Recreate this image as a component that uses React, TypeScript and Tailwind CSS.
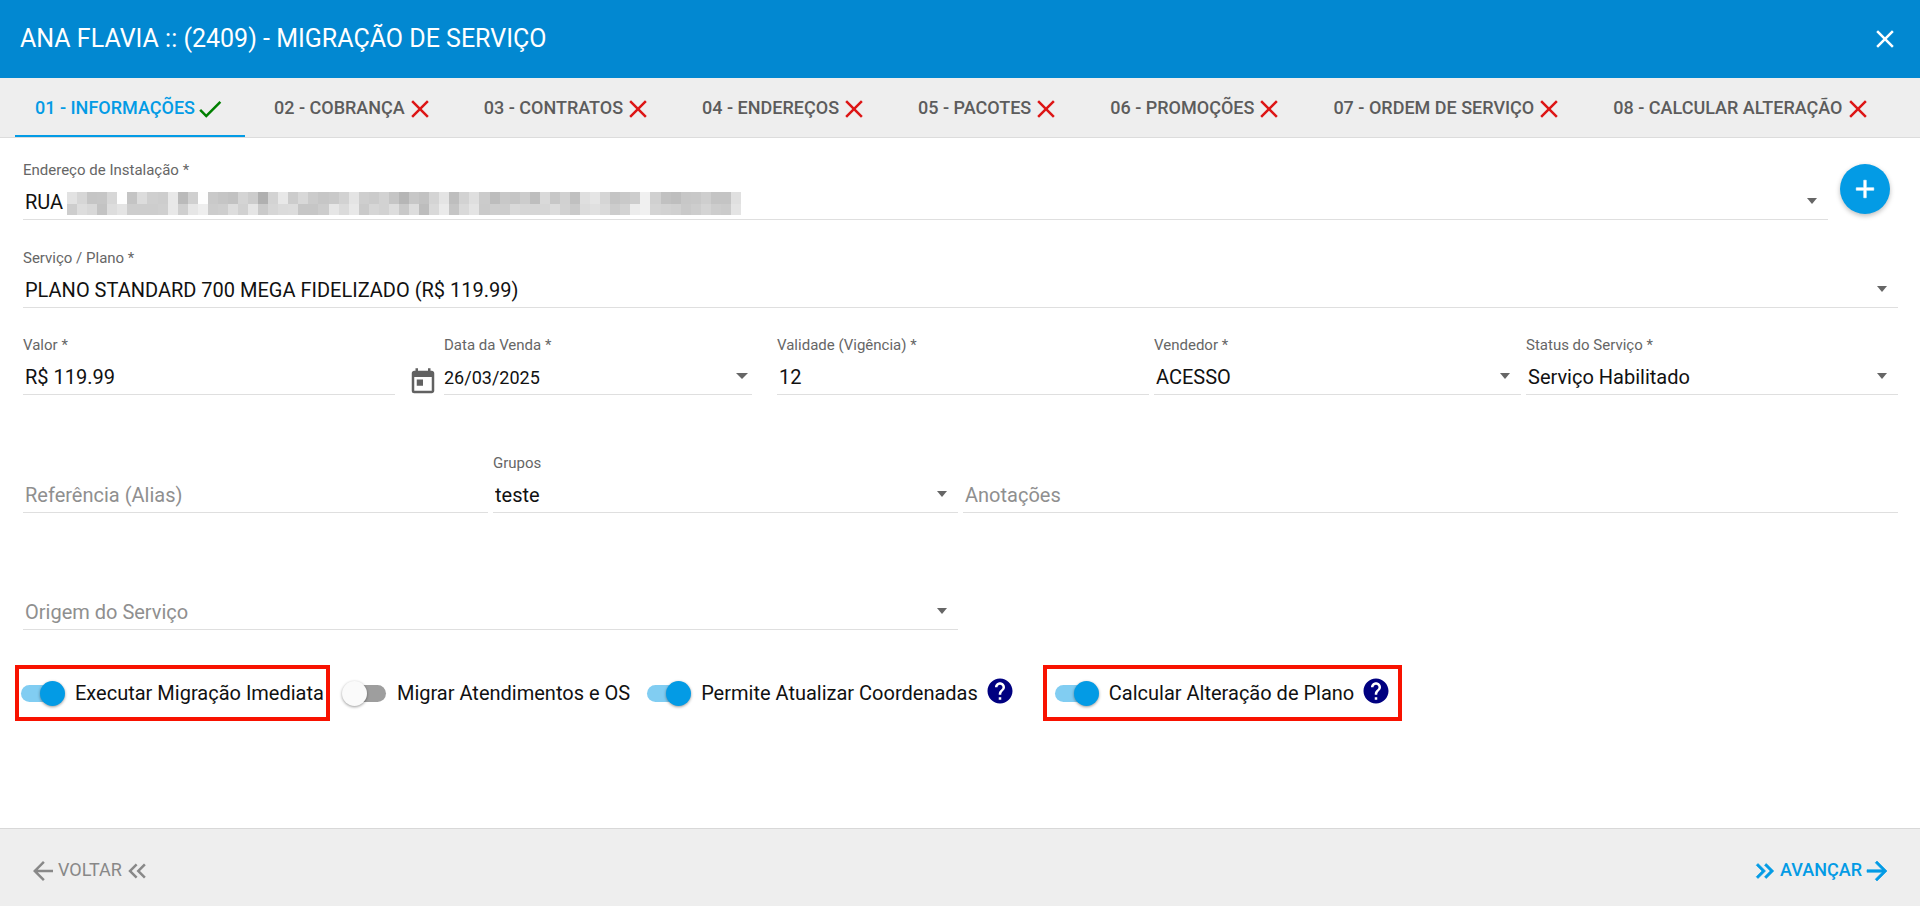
import type { ReactNode } from "react"
import {
  MdAdd,
  MdArrowBack,
  MdArrowForward,
  MdCheck,
  MdClose,
  MdHelp,
  MdKeyboardDoubleArrowLeft,
  MdKeyboardDoubleArrowRight,
  MdToday,
} from "react-icons/md"

const tabs = [
  { label: "01 - INFORMAÇÕES", done: true },
  { label: "02 - COBRANÇA", done: false },
  { label: "03 - CONTRATOS", done: false },
  { label: "04 - ENDEREÇOS", done: false },
  { label: "05 - PACOTES", done: false },
  { label: "06 - PROMOÇÕES", done: false },
  { label: "07 - ORDEM DE SERVIÇO", done: false },
  { label: "08 - CALCULAR ALTERAÇÃO", done: false },
]

// grey levels of the mosaic that hides the address, one hex pair per cell
const mosaicRows = [
  "e2 d6 c5 c6 d7 fe c4 dc cf cd e8 ba d0 fe c9 c5 c2 d4 cc b0 d3 e8 cc d8 cb c6 c9 d2 e4 ce cb d2 c5 b6 c7 c2 d4 e4 be d2 df cb bd c8 c5 cc be d9 c7 d1 c0 df e5 d5 c4 c9 cd f0 d0 c1 be c7 c8 ce c4 c4 e0",
  "cd dd d8 c3 dd e4 cd cd cd cf e8 cf e6 ee cc ce dd d1 e5 ca d6 db dc c6 c6 cc e6 db e8 ca d6 d2 dd c9 dd bd d9 ea c5 d9 e4 ca ce cd d9 d6 d6 d6 dc d2 ca dc e0 da cc d3 ec f0 d4 d2 d0 c9 cd d4 cd cb e4",
]

function Mosaic() {
  return (
    <svg width="674" height="23" viewBox="0 0 67 2" preserveAspectRatio="none" shapeRendering="crispEdges" aria-hidden="true">
      {mosaicRows.map((row, y) =>
        row.split(" ").map((v, x) => <rect key={`${x}-${y}`} x={x} y={y} width="1" height="1" fill={`#${v}${v}${v}`} />)
      )}
    </svg>
  )
}

function Caret({ className = "right-[11px] w-[10px]" }: { className?: string }) {
  return (
    <svg height="6" viewBox="0 0 10 6" preserveAspectRatio="none" className={`pointer-events-none absolute top-[10px] ${className}`} aria-hidden="true">
      <path d="M0 0h10L5 6z" fill="#666" />
    </svg>
  )
}

type FieldProps = { id: string; label?: string; required?: boolean; className?: string; children: ReactNode }

function Field({ id, label, required, className = "", children }: FieldProps) {
  return (
    <div className={`min-w-0 ${className}`}>
      <label htmlFor={id} className="block h-5 text-[15px] leading-[18px] text-[#666]">
        {label}
        {required && " *"}
      </label>
      <div className="relative mt-[7px] h-8 border-b border-[#dfdfdf]">{children}</div>
    </div>
  )
}

const control = "block h-full w-full appearance-none bg-transparent pb-[3px] outline-none placeholder:text-[#8f8f8f]"
const textControl = `${control} pl-[2px] text-xl text-[#111]`

// thickens a glyph without outlining the blank 24px box that the icon set puts behind it
const boldIcon = "stroke-current [stroke-width:0.5] [&_[fill=none]]:stroke-none"

function SelectField({ value, placeholder, children, ...field }: Omit<FieldProps, "children"> & { value?: string; placeholder?: string; children?: ReactNode }) {
  return (
    <Field {...field}>
      <select
        id={field.id}
        aria-label={placeholder}
        className={placeholder ? `${control} pl-[2px] text-xl text-[#8f8f8f]` : textControl}
      >
        <option>{value ?? placeholder}</option>
      </select>
      {children}
      <Caret />
    </Field>
  )
}

function Toggle({ label, on }: { label: string; on?: boolean }) {
  return (
    <label className="flex cursor-pointer items-center gap-[10px] text-xl text-[#111]">
      <span className="relative flex h-[25px] w-[45px] items-center">
        <input type="checkbox" role="switch" defaultChecked={on} className="peer absolute inset-0 opacity-0" />
        <span className="ml-px h-[17px] w-[43px] rounded-full bg-[#9e9e9e] peer-checked:bg-[#81cdf2]" />
        <span className="absolute left-0 size-[25px] rounded-full bg-[#fafafa] shadow-[0_1px_3px_rgba(0,0,0,0.4)] peer-checked:left-5 peer-checked:bg-[#039be5]" />
      </span>
      {label}
    </label>
  )
}

function Help() {
  return (
    <button type="button" aria-label="Ajuda" className="mb-1 text-[#000080]">
      <MdHelp size={30} />
    </button>
  )
}

export default function App() {
  return (
    <div className="flex min-h-screen flex-col bg-white font-['Roboto',sans-serif]">
      <header className="flex h-[78px] items-center justify-between bg-[#0288d1] px-5 text-white">
        <h1 className="text-[25px] leading-8">ANA FLAVIA :: (2409) - MIGRAÇÃO DE SERVIÇO</h1>
        <button type="button" aria-label="Fechar">
          <MdClose size={30} />
        </button>
      </header>

      <nav className="flex h-[60px] gap-[9px] border-b border-[#dcdcdc] bg-[#eee] px-[15px]">
        {tabs.map((tab) => (
          <button
            key={tab.label}
            type="button"
            className={`flex items-center whitespace-nowrap border-b-2 px-5 pt-[2px] text-lg font-medium ${
              tab.done ? "border-[#039be5] text-[#039be5]" : "border-transparent text-[#5c5c5c]"
            }`}
          >
            {tab.label}
            {tab.done ? (
              <MdCheck size={30} className="mt-[2px] text-[#008000]" />
            ) : (
              <MdClose size={30} className="mt-[2px] text-[#dd1515]" />
            )}
          </button>
        ))}
      </nav>

      <main className="flex-1 pl-[23px] pr-[22px] pt-[23px]">
        <div className="flex">
          <SelectField id="endereco" label="Endereço de Instalação" required value="RUA" className="flex-1">
            <span className="pointer-events-none absolute left-11 top-1">
              <Mosaic />
            </span>
          </SelectField>
          <button
            type="button"
            aria-label="Adicionar endereço"
            className="ml-3 mr-2 mt-[3px] flex size-[50px] items-center justify-center rounded-full bg-[#039be5] text-white shadow-[0_2px_5px_rgba(0,0,0,0.26)]"
          >
            <MdAdd size={30} className={boldIcon} />
          </button>
        </div>

        <SelectField id="plano" label="Serviço / Plano" required value="PLANO STANDARD 700 MEGA FIDELIZADO (R$ 119.99)" className="mt-[29px]" />

        <div className="mt-7 grid grid-cols-[372fr_372fr_372fr_367fr_372fr] gap-[5px]">
          <Field id="valor" label="Valor" required>
            <input id="valor" type="text" defaultValue="R$ 119.99" className={textControl} />
          </Field>
          <div className="flex pl-2 pr-5">
            <button type="button" aria-label="Abrir calendário" className="mr-[6px] mt-[31px] text-[#616161]">
              <MdToday size={30} />
            </button>
            <Field id="data" label="Data da Venda" required className="flex-1">
              <input id="data" type="text" defaultValue="26/03/2025" className={`${control} text-lg text-[#111]`} />
              <Caret className="right-[4px] w-3" />
            </Field>
          </div>
          <Field id="validade" label="Validade (Vigência)" required>
            <input id="validade" type="text" defaultValue="12" className={textControl} />
          </Field>
          <SelectField id="vendedor" label="Vendedor" required value="ACESSO" />
          <SelectField id="status" label="Status do Serviço" required value="Serviço Habilitado" />
        </div>

        <div className="mt-[57px] grid grid-cols-[465fr_465fr_935fr] gap-[5px]">
          <Field id="referencia">
            <input id="referencia" type="text" placeholder="Referência (Alias)" aria-label="Referência (Alias)" className={textControl} />
          </Field>
          <SelectField id="grupos" label="Grupos" value="teste" />
          <Field id="anotacoes">
            <input id="anotacoes" type="text" placeholder="Anotações" aria-label="Anotações" className={textControl} />
          </Field>
        </div>

        <div className="mt-[58px] grid grid-cols-[935fr_935fr] gap-[5px]">
          <SelectField id="origem" placeholder="Origem do Serviço" />
        </div>

        <div className="-ml-2 mt-[35px] flex items-center">
          <div className="flex h-14 items-center border-4 border-[#f81200] pl-px pr-[2px]">
            <Toggle label="Executar Migração Imediata" on />
          </div>
          <div className="ml-3">
            <Toggle label="Migrar Atendimentos e OS" />
          </div>
          <div className="ml-4 flex items-center gap-[7px]">
            <Toggle label="Permite Atualizar Coordenadas" on />
            <Help />
          </div>
          <div className="ml-7 flex h-14 items-center gap-[7px] border-4 border-[#f81200] px-[7px]">
            <Toggle label="Calcular Alteração de Plano" on />
            <Help />
          </div>
        </div>
      </main>

      <footer className="flex h-[78px] items-center justify-between border-t border-[#d8d8d8] bg-[#eee] px-7 pt-1 text-lg">
        <button type="button" disabled className="flex items-center text-[#888]">
          <MdArrowBack size={30} className="mt-[2px]" />
          VOLTAR
          <MdKeyboardDoubleArrowLeft size={30} className="mt-[2px]" />
        </button>
        <button type="button" className="flex items-center font-medium text-[#039be5]">
          <MdKeyboardDoubleArrowRight size={30} className={`mt-[2px] ${boldIcon}`} />
          AVANÇAR
          <MdArrowForward size={30} className={`mt-[2px] ${boldIcon}`} />
        </button>
      </footer>
    </div>
  )
}
